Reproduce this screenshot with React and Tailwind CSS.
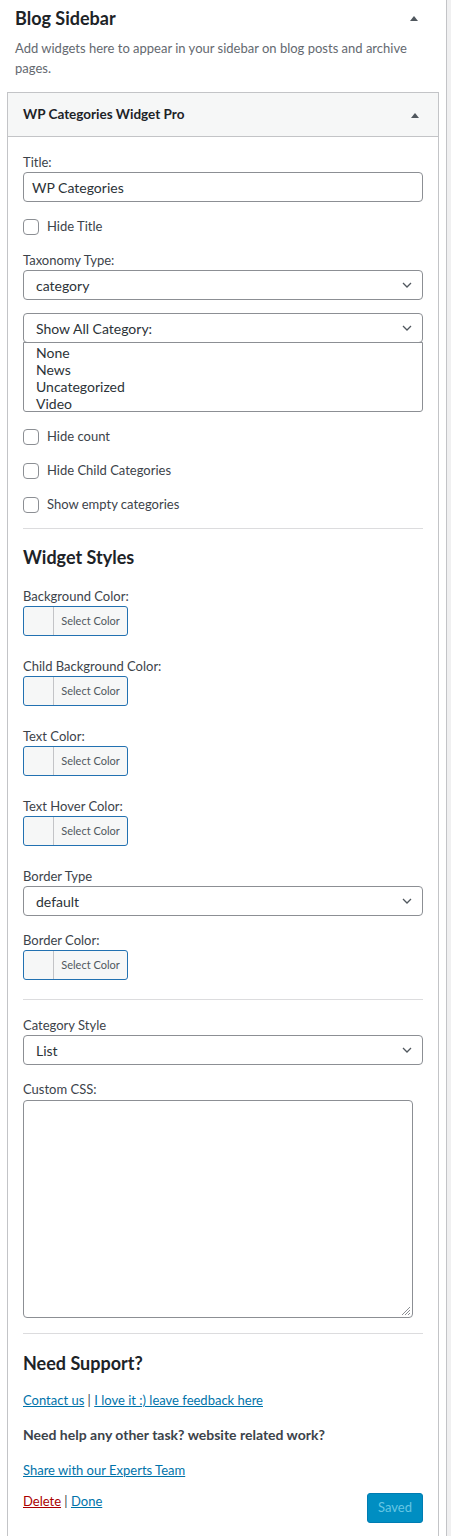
import React from "react";

const Tri = () => (
  <svg width="10" height="6" viewBox="0 0 10 6" className="block">
    <path d="M1 6 L5 1 L9 6 Z" fill="#50575e" />
  </svg>
);

const Chevron = () => (
  <svg width="16" height="16" viewBox="0 0 20 20" className="block">
    <path d="M5 7.5 L10 12.5 L15 7.5" fill="none" stroke="#50575e" strokeWidth="1.6" />
  </svg>
);

const Check = ({ label, cls }) => (
  <div className={"flex items-center h-5 " + cls}>
    <span className="w-4 h-4 border border-[#8c8f94] rounded-[4px] bg-white shrink-0" />
    <span className="ml-2 text-[13px] text-[#3c434a]">{label}</span>
  </div>
);

const Select = ({ value, cls }) => (
  <div className={"h-[30px] border border-[#8c8f94] rounded-[4px] bg-white flex items-center justify-between pl-3 pr-[7px] " + cls}>
    <span className="text-[14px] text-[#2c3338]">{value}</span>
    <Chevron />
  </div>
);

const Label = ({ children, cls }) => (
  <div className={"h-5 leading-5 text-[13px] text-[#3c434a] " + cls}>{children}</div>
);

const ColorBtn = () => (
  <div className="h-[30px] w-[105px] border border-[#2271b1] rounded-[3px] bg-[#f6f7f7] flex">
    <span className="w-[30px] h-full border-r border-[#c3c4c7]" />
    <span className="flex-1 flex items-center justify-center text-[11px] text-[#50575e]">Select Color</span>
  </div>
);

export default function App() {
  return (
    <div className="flex bg-[#f0f0f1] min-h-[1536px]" style={{ fontFamily: "Lato, 'Noto Sans', sans-serif" }}>
      <div className="w-[447px] bg-white border-r border-[#c3c4c7] pb-10">
        <div className="pl-[15px] pr-[27px] pt-[6px]">
          <div className="flex items-center justify-between h-6">
            <h2 className="text-[18px] font-bold text-[#1d2327]">Blog Sidebar</h2>
            <Tri />
          </div>
          <p className="mt-[8px] text-[13px] leading-5 text-[#646970]">
            Add widgets here to appear in your sidebar on blog posts and archive pages.
          </p>
        </div>
        <div className="ml-[7px] w-[432px] mt-[14px] border border-[#c3c4c7] bg-white">
          <div className="h-[44px] bg-[#f6f7f7] border-b border-[#c3c4c7] flex items-center justify-between pl-[15px] pr-[18px]">
            <span className="text-[13.5px] font-bold text-[#1d2327]">WP Categories Widget Pro</span>
            <Tri />
          </div>
          <div className="px-[15px] pt-[15px] pb-10">
            <Label>Title:</Label>
            <div className="h-[30px] border border-[#8c8f94] rounded-[4px] bg-white flex items-center px-2 text-[14px] text-[#2c3338]">
              WP Categories
            </div>
            <Check label="Hide Title" cls="mt-[15px]" />
            <Label cls="mt-[13px]">Taxonomy Type:</Label>
            <Select value="category" />
            <Select value="Show All Category:" cls="mt-[13px]" />
            <div className="-mt-px h-[70px] border border-[#8c8f94] rounded-b-[3px] bg-white pl-3 pt-[1px] text-[14px] leading-[17px] text-[#2c3338]">
              <div>None</div>
              <div>News</div>
              <div>Uncategorized</div>
              <div>Video</div>
            </div>
            <Check label="Hide count" cls="mt-[15px]" />
            <Check label="Hide Child Categories" cls="mt-[14px]" />
            <Check label="Show empty categories" cls="mt-[14px]" />
            <div className="mt-[13px] border-t border-[#dcdcde]" />
            <h3 className="mt-[16px] h-6 leading-6 text-[18px] font-bold text-[#1d2327]">Widget Styles</h3>
            <Label cls="mt-[17px]">Background Color:</Label>
            <ColorBtn />
            <Label cls="mt-[20px]">Child Background Color:</Label>
            <ColorBtn />
            <Label cls="mt-[20px]">Text Color:</Label>
            <ColorBtn />
            <Label cls="mt-[20px]">Text Hover Color:</Label>
            <ColorBtn />
            <Label cls="mt-[20px]">Border Type</Label>
            <Select value="default" />
            <Label cls="mt-[14px]">Border Color:</Label>
            <ColorBtn />
            <div className="mt-[19px] border-t border-[#dcdcde]" />
            <Label cls="mt-[15px]">Category Style</Label>
            <Select value="List" />
            <Label cls="mt-[14px]">Custom CSS:</Label>
            <div className="mt-px relative h-[218px] w-[390px] border border-[#8c8f94] rounded-[4px] bg-white">
              <svg width="10" height="10" viewBox="0 0 10 10" className="absolute right-[1px] bottom-[1px]">
                <path d="M9 1 L1 9 M9 4 L4 9 M9 7 L7 9" stroke="#8c8f94" strokeWidth="1" />
              </svg>
            </div>
            <div className="mt-[15px] border-t border-[#dcdcde]" />
            <h3 className="mt-[17px] h-6 leading-6 text-[18px] font-bold text-[#1d2327]">Need Support?</h3>
            <div className="mt-[15px] h-5 leading-5 text-[13px] text-[#3c434a]">
              <a className="text-[#0073aa] underline">Contact us</a> | <a className="text-[#0073aa] underline">I love it :) leave feedback here</a>
            </div>
            <div className="mt-[15px] h-5 leading-5 text-[14px] font-bold text-[#3c434a]">
              Need help any other task? website related work?
            </div>
            <div className="mt-[15px] h-5 leading-5 text-[13px]">
              <a className="text-[#0073aa] underline">Share with our Experts Team</a>
            </div>
            <div className="mt-[11px] flex justify-between items-start">
              <div className="h-5 leading-5 text-[13px] text-[#3c434a]">
                <a className="text-[#a00] underline">Delete</a> | <a className="text-[#0073aa] underline">Done</a>
              </div>
              <div className="mt-[2px] h-[30px] px-[10px] rounded-[3px] bg-[#008ec2] border border-[#007cb2] flex items-center text-[13px] text-[#66c6e4]">
                Saved
              </div>
            </div>
          </div>
        </div>
      </div>
    </div>
  );
}
